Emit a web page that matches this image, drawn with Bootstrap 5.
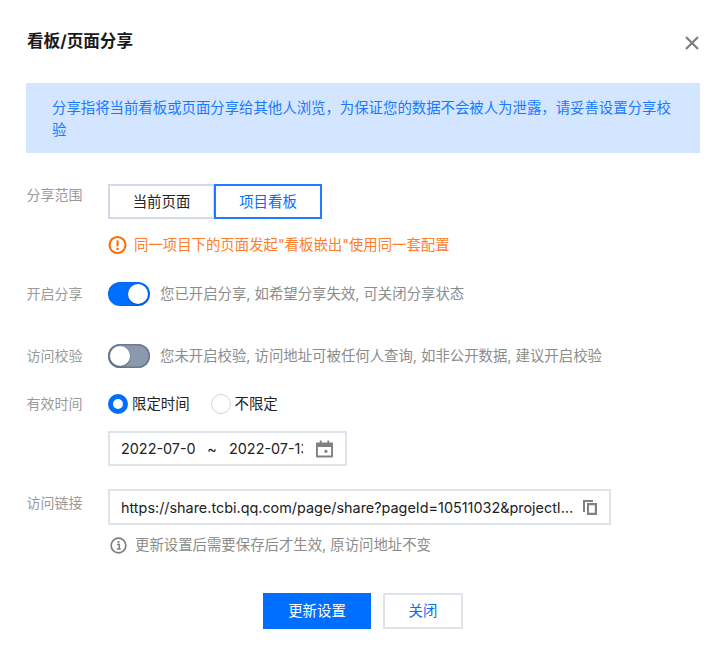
<!DOCTYPE html>
<html lang="zh-CN">
<head>
<meta charset="utf-8">
<title>看板/页面分享</title>
<link href="https://cdn.jsdelivr.net/npm/bootstrap@5.3.0/dist/css/bootstrap.min.css" rel="stylesheet">
<style>
html,body{height:656px;overflow:hidden;background:#fff}
body{font-family:Inter,"Noto Sans CJK SC",sans-serif;font-size:14.4px;color:#222}
.dlg{padding:0 28px 0 26px}
.dlg-head{height:83px;padding-top:29px}
.dlg-title{font-size:16.6px;font-weight:700;line-height:24px;margin:0 0 0 1px;color:#1a1a1a}
.dlg-x{width:16px;height:16px;padding:0;border:0;background:none;margin-top:2px;display:block}
.tip{background:#d4e5ff;color:#1a7aff;border:0;border-radius:0;padding:14px 26px 13px;font-size:14.4px;line-height:21.5px;height:70px;margin:0}
.lab{width:82px;flex:none;color:#9a9a9a;line-height:22px;font-size:14px;padding-left:.5px}
.seg{height:35px;width:107px;border-radius:0;font-size:14.4px;padding:0;color:#222;border:2px solid #d3dae6;background:#fff}
.seg.on{color:#0a6cf5;border:2px solid #1f7bff;position:relative;margin-left:-1px;width:108px}
.warn{color:#ff7e2a;line-height:20px;gap:7px;margin-left:82px}
.sw{width:42px;height:24px;border-radius:12px;flex:none;display:flex;align-items:center;padding:2px;margin-right:10px;box-shadow:inset 0 0 0 1px rgba(0,0,0,.06)}
.sw i{display:block;width:20px;height:20px;border-radius:50%;background:#fff;box-shadow:0 1px 2px rgba(0,0,0,.3)}
.sw-on{background:#006eff;justify-content:flex-end}
.sw-off{background:#8c98ae;justify-content:flex-start;box-shadow:inset 0 0 0 1.5px #6b7890}
.hint{color:#8c8c8c;line-height:22px}
.rad{width:20px;height:20px;border-radius:50%;flex:none;background:#fff;border:1px solid #cfd5de}
.rad-on{border:5px solid #006eff}
.rad-gap{margin-left:21px}
.fld{border:2px solid #dfe3ea;background:#fff;display:flex;align-items:center;color:#222}
.date{width:239px;height:35px;padding:0 12px 0 11px}
.dv{width:74px;overflow:hidden;white-space:nowrap;flex:none}
.dsep{width:34px;flex:none;text-align:center}
.url{width:503px;height:36px;padding:1px 12px 0 11px}
.url span{flex:1;min-width:0;overflow:hidden;white-space:nowrap;text-overflow:ellipsis}
.act{height:36px;border-radius:0;font-size:14.4px;padding:0}
.act-p{width:108px;background:#006eff;border:1px solid #006eff;color:#fff}
.act-s{width:80px;background:#fff;border:2px solid #dfe3ea;color:#0a6cf5}
.ico-i{margin-left:2px}
.lab-url{padding-top:3px}
.r-seg{margin-top:31px}
.r-warn{margin-top:16px}
.r-s1{margin-top:27px}
.r-s2{margin-top:38px}
.r-rad{margin-top:25px}
.r-date{margin-top:16px;margin-left:82px}
.r-url{margin-top:23px}
.r-info{margin-top:9px;margin-left:82px}
.r-foot{margin-top:37px}
</style>
</head>
<body>
<div class="dlg">
  <div class="dlg-head d-flex justify-content-between align-items-start">
    <h5 class="dlg-title">看板/页面分享</h5>
    <button type="button" class="dlg-x" aria-label="关闭">
      <svg width="16" height="16" viewBox="0 0 16 16"><path d="M2 2L14 14M14 2L2 14" stroke="#7f7f7f" stroke-width="2.2" fill="none"/></svg>
    </button>
  </div>
  <div class="alert tip" role="alert">分享指将当前看板或页面分享给其他人浏览，为保证您的数据不会被人为泄露，请妥善设置分享校验</div>

  <div class="d-flex r-seg">
    <div class="lab">分享范围</div>
    <div class="btn-group" role="group">
      <button type="button" class="btn seg">当前页面</button>
      <button type="button" class="btn seg on">项目看板</button>
    </div>
  </div>
  <div class="d-flex align-items-center warn r-warn">
    <svg width="19" height="20" viewBox="0 0 20 20" class="flex-shrink-0"><circle cx="10" cy="10" r="8.4" fill="none" stroke="#ff6a00" stroke-width="2.2"/><path d="M10 5.2V11.4" stroke="#ff6a00" stroke-width="2.2"/><circle cx="10" cy="14.2" r="1.3" fill="#ff6a00"/></svg>
    <span>同一项目下的页面发起"看板嵌出"使用同一套配置</span>
  </div>

  <div class="d-flex align-items-center r-s1">
    <div class="lab">开启分享</div>
    <div class="sw sw-on"><i></i></div>
    <div class="hint">您已开启分享, 如希望分享失效, 可关闭分享状态</div>
  </div>
  <div class="d-flex align-items-center r-s2">
    <div class="lab">访问校验</div>
    <div class="sw sw-off"><i></i></div>
    <div class="hint">您未开启校验, 访问地址可被任何人查询, 如非公开数据, 建议开启校验</div>
  </div>

  <div class="d-flex align-items-center r-rad">
    <div class="lab">有效时间</div>
    <div class="d-flex align-items-center">
      <span class="rad rad-on"></span><span class="ms-1">限定时间</span>
      <span class="rad rad-gap"></span><span class="ms-1">不限定</span>
    </div>
  </div>
  <div class="fld date r-date">
    <span class="dv">2022-07-0</span>
    <span class="dsep">~</span>
    <span class="dv">2022-07-13</span>
    <svg class="ms-auto flex-shrink-0" width="17" height="18" viewBox="0 0 18 18"><path fill="#808080" fill-rule="evenodd" d="M4 0h2v2h6V0h2v2h3a1 1 0 0 1 1 1v14a1 1 0 0 1-1 1H1a1 1 0 0 1-1-1V3a1 1 0 0 1 1-1h3zM2 7v9h14V7z"/><rect x="9" y="10" width="3" height="3" fill="#808080"/></svg>
  </div>

  <div class="d-flex align-items-center r-url">
    <div class="lab lab-url align-self-start">访问链接</div>
    <div class="fld url">
      <span>https://share.tcbi.qq.com/page/share?pageId=10511032&amp;projectId=1023&amp;token=a8f3c1d2</span>
      <svg class="ms-2 flex-shrink-0" width="14" height="15" viewBox="0 0 14 15"><path fill="#808080" fill-rule="evenodd" d="M0 0h10v2H2v10H0zM4 3h10v12H4zM6 5.2v7.6h5.8V5.2z"/></svg>
    </div>
  </div>
  <div class="d-flex align-items-center gap-2 hint r-info">
    <svg width="17" height="17" viewBox="0 0 18 18" class="ico-i flex-shrink-0"><circle cx="9" cy="9" r="7.8" fill="none" stroke="#808080" stroke-width="1.8"/><circle cx="9" cy="5.4" r="1.2" fill="#808080"/><path d="M7.4 8h2.4v4.6M7.2 12.8h4.2" fill="none" stroke="#808080" stroke-width="1.6"/></svg>
    <span>更新设置后需要保存后才生效, 原访问地址不变</span>
  </div>

  <div class="d-flex justify-content-center gap-2 r-foot">
    <button type="button" class="btn act act-p me-1">更新设置</button>
    <button type="button" class="btn act act-s">关闭</button>
  </div>
</div>
<script src="https://cdn.jsdelivr.net/npm/bootstrap@5.3.0/dist/js/bootstrap.bundle.min.js"></script>
</body>
</html>
